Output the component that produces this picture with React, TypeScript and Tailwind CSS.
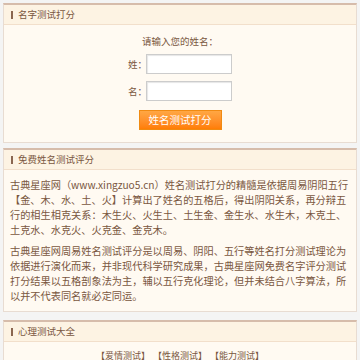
import type { ReactNode } from 'react'

const font = { fontFamily: '"Noto Sans CJK SC", "Noto Sans", sans-serif' }

function Panel({ title, children }: { title: string; children: ReactNode }) {
  return (
    <div className="border border-[#e8dcd2] border-t-2 border-t-[#d6bcab] bg-[#fffaf2]">
      {/* Header */}
      <div className="flex h-[20px] items-center gap-[5px] border-b border-[#f2dfcb] bg-[#fdf3e3] pl-[7px]">
        <span className="h-[8px] w-[2px] bg-[#8a6650]" />
        <span className="text-[9.5px] text-[#7a573f]">{title}</span>
      </div>
      {children}
    </div>
  )
}

function Line({ text, last }: { text: string; last?: boolean }) {
  return (
    <div className={last ? 'whitespace-nowrap' : 'whitespace-nowrap text-justify [text-align-last:justify]'}>
      {text}
    </div>
  )
}

export default function App() {
  const para1 = [
    '古典星座网（www.xingzuo5.cn）姓名测试打分的精髓是依据周易阴阳五行',
    '【金、木、水、土、火】计算出了姓名的五格后，得出阴阳关系，再分辩五',
    '行的相生相克关系：木生火、火生土、土生金、金生水、水生木，木克土、',
    '土克水、水克火、火克金、金克木。',
  ]
  const para2 = [
    '古典星座网周易姓名测试评分是以周易、阴阳、五行等姓名打分测试理论为',
    '依据进行演化而来，并非现代科学研究成果，古典星座网免费名字评分测试',
    '打分结果以五格剖象法为主，辅以五行克化理论，但并未结合八字算法，所',
    '以并不代表同名就必定同运。',
  ]

  return (
    <div className="h-[360px] overflow-hidden bg-[#f4f4f4] px-[3px] pt-[3px]" style={font}>
      {/* 名字测试打分 */}
      <Panel title="名字测试打分">
        <div className="flex h-[117px] flex-col items-center pt-[9px] text-[#7a573f]">
          <div className="text-[9.5px] leading-[15px]">请输入您的姓名：</div>
          <div className="mt-[5px] flex items-center">
            <span className="w-[18px] text-[9.5px]">姓：</span>
            <input className="h-[20px] w-[86px] border border-[#cccccc] bg-white shadow-[inset_1px_1px_1px_#e6e6e6] outline-none" />
          </div>
          <div className="mt-[7px] flex items-center">
            <span className="w-[18px] text-[9.5px]">名：</span>
            <input className="h-[20px] w-[86px] border border-[#cccccc] bg-white shadow-[inset_1px_1px_1px_#e6e6e6] outline-none" />
          </div>
          <button className="mt-[9px] h-[20px] w-[83px] border border-[#f08a12] bg-gradient-to-b from-[#ffa743] to-[#ff7d02] text-[10.5px] leading-none text-white">
            姓名测试打分
          </button>
        </div>
      </Panel>

      <div className="h-[5px]" />

      {/* 免费姓名测试评分 */}
      <Panel title="免费姓名测试评分">
        <div className="w-[352px] pb-[8px] pl-[6px] pr-[10px] pt-[7px] text-[10.2px] leading-[15px] text-[#7a573f]">
          <div className="w-[336px]">
            {para1.map((t, i) => (
              <Line key={i} text={t} last={i === para1.length - 1} />
            ))}
          </div>
          <div className="mt-[6px] w-[336px]">
            {para2.map((t, i) => (
              <Line key={i} text={t} last={i === para2.length - 1} />
            ))}
          </div>
        </div>
      </Panel>

      <div className="h-[8px]" />

      {/* 心理测试大全 */}
      <Panel title="心理测试大全">
        <div className="flex justify-center gap-[3px] pt-[7px] text-[9px] text-[#7a573f]">
          <span>【爱情测试】</span>
          <span>【性格测试】</span>
          <span>【能力测试】</span>
        </div>
      </Panel>
    </div>
  )
}
